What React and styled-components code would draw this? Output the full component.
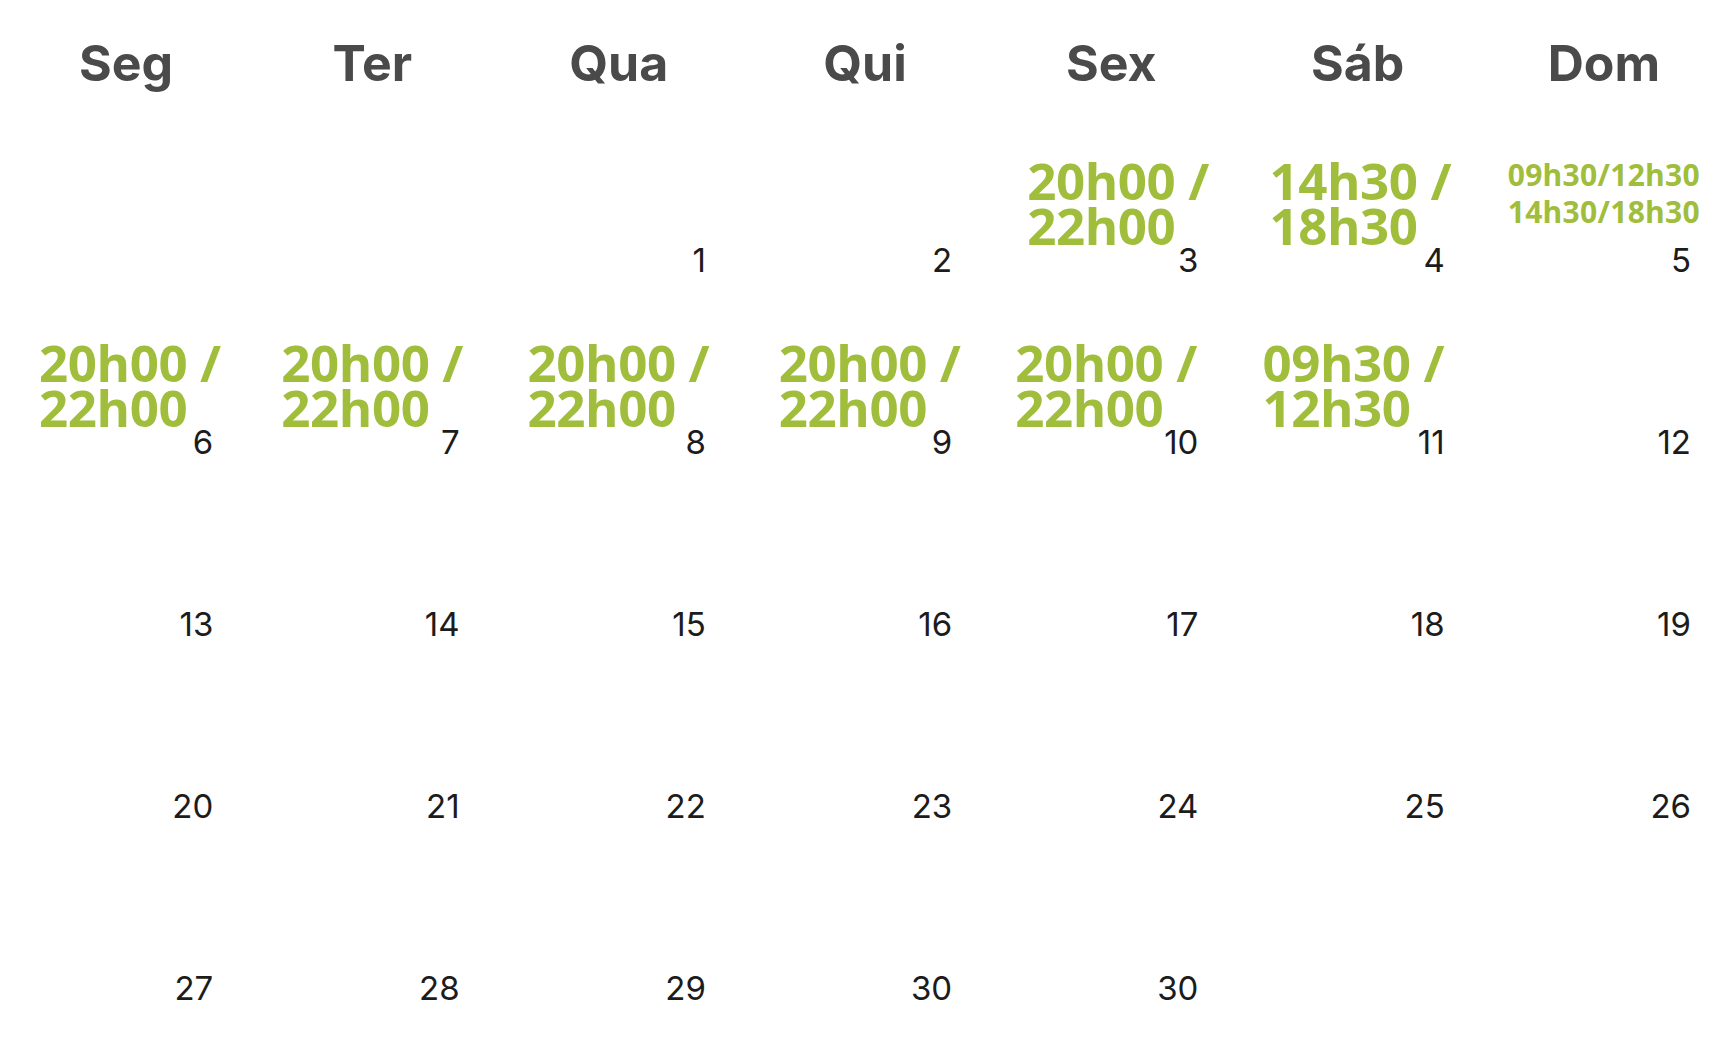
import React from "react";
import styled, { createGlobalStyle } from "styled-components";

const GlobalStyle = createGlobalStyle`
  html, body {
    margin: 0;
    padding: 0;
    background: #ffffff;
  }
`;

const days = ["Seg", "Ter", "Qua", "Qui", "Sex", "Sáb", "Dom"];

// each cell: day number, optional schedule lines and left offset of the schedule
const weeks = [
  [
    null,
    null,
    { day: 1 },
    { day: 2 },
    { day: 3, times: ["20h00 /", "22h00"], offset: 39 },
    { day: 4, times: ["14h30 /", "18h30"], offset: 35 },
    { day: 5, times: ["09h30/12h30", "14h30/18h30"], small: true },
  ],
  [
    { day: 6, times: ["20h00 /", "22h00"], offset: 36 },
    { day: 7, times: ["20h00 /", "22h00"], offset: 32 },
    { day: 8, times: ["20h00 /", "22h00"], offset: 32 },
    { day: 9, times: ["20h00 /", "22h00"], offset: 37 },
    { day: 10, times: ["20h00 /", "22h00"], offset: 27 },
    { day: 11, times: ["09h30 /", "12h30"], offset: 28 },
    { day: 12 },
  ],
  [{ day: 13 }, { day: 14 }, { day: 15 }, { day: 16 }, { day: 17 }, { day: 18 }, { day: 19 }],
  [{ day: 20 }, { day: 21 }, { day: 22 }, { day: 23 }, { day: 24 }, { day: 25 }, { day: 26 }],
  [{ day: 27 }, { day: 28 }, { day: 29 }, { day: 30 }, { day: 30 }, null, null],
];

const Calendar = styled.div`
  display: grid;
  grid-template-columns: repeat(7, 1fr);
  grid-template-rows: 94px repeat(5, 182px);
  padding: 0 3px;
  width: 1724px;
`;

const DayName = styled.div`
  box-sizing: border-box;
  padding-top: 38px;
  text-align: center;
  font-family: Inter, "Open Sans", sans-serif;
  font-weight: 700;
  font-size: 50px;
  line-height: 50px;
  color: #4a4a4a;
`;

const Cell = styled.div`
  display: flex;
  flex-direction: column;
  justify-content: flex-end;
  min-width: 0;
`;

const Schedule = styled.div`
  font-family: "Open Sans", sans-serif;
  font-weight: 700;
  color: #a0bd3c;
  white-space: nowrap;
  font-size: ${(p) => (p.$small ? "30px" : "51px")};
  line-height: ${(p) => (p.$small ? "37px" : "45px")};
  letter-spacing: ${(p) => (p.$small ? "0.3px" : "-0.4px")};
  text-align: ${(p) => (p.$small ? "center" : "left")};
  padding-left: ${(p) => (p.$small ? 0 : p.$offset)}px;
  margin-bottom: ${(p) => (p.$small ? "19px" : "1px")};
`;

const DayNumber = styled.div`
  font-family: Inter, "Open Sans", sans-serif;
  font-weight: 400;
  font-size: 33px;
  line-height: 22px;
  color: #1c1c1c;
  text-align: right;
  padding-right: 36px;
  margin-bottom: 5px;
`;

export default function App() {
  return (
    <>
      <GlobalStyle />
      <Calendar>
        {days.map((d) => (
          <DayName key={d}>{d}</DayName>
        ))}
        {weeks.map((week, w) =>
          week.map((cell, i) => (
            <Cell key={`${w}-${i}`}>
              {cell && cell.times && (
                <Schedule $small={cell.small} $offset={cell.offset || 0}>
                  {cell.times.map((t) => (
                    <div key={t}>{t}</div>
                  ))}
                </Schedule>
              )}
              {cell && <DayNumber>{cell.day}</DayNumber>}
            </Cell>
          ))
        )}
      </Calendar>
    </>
  );
}
